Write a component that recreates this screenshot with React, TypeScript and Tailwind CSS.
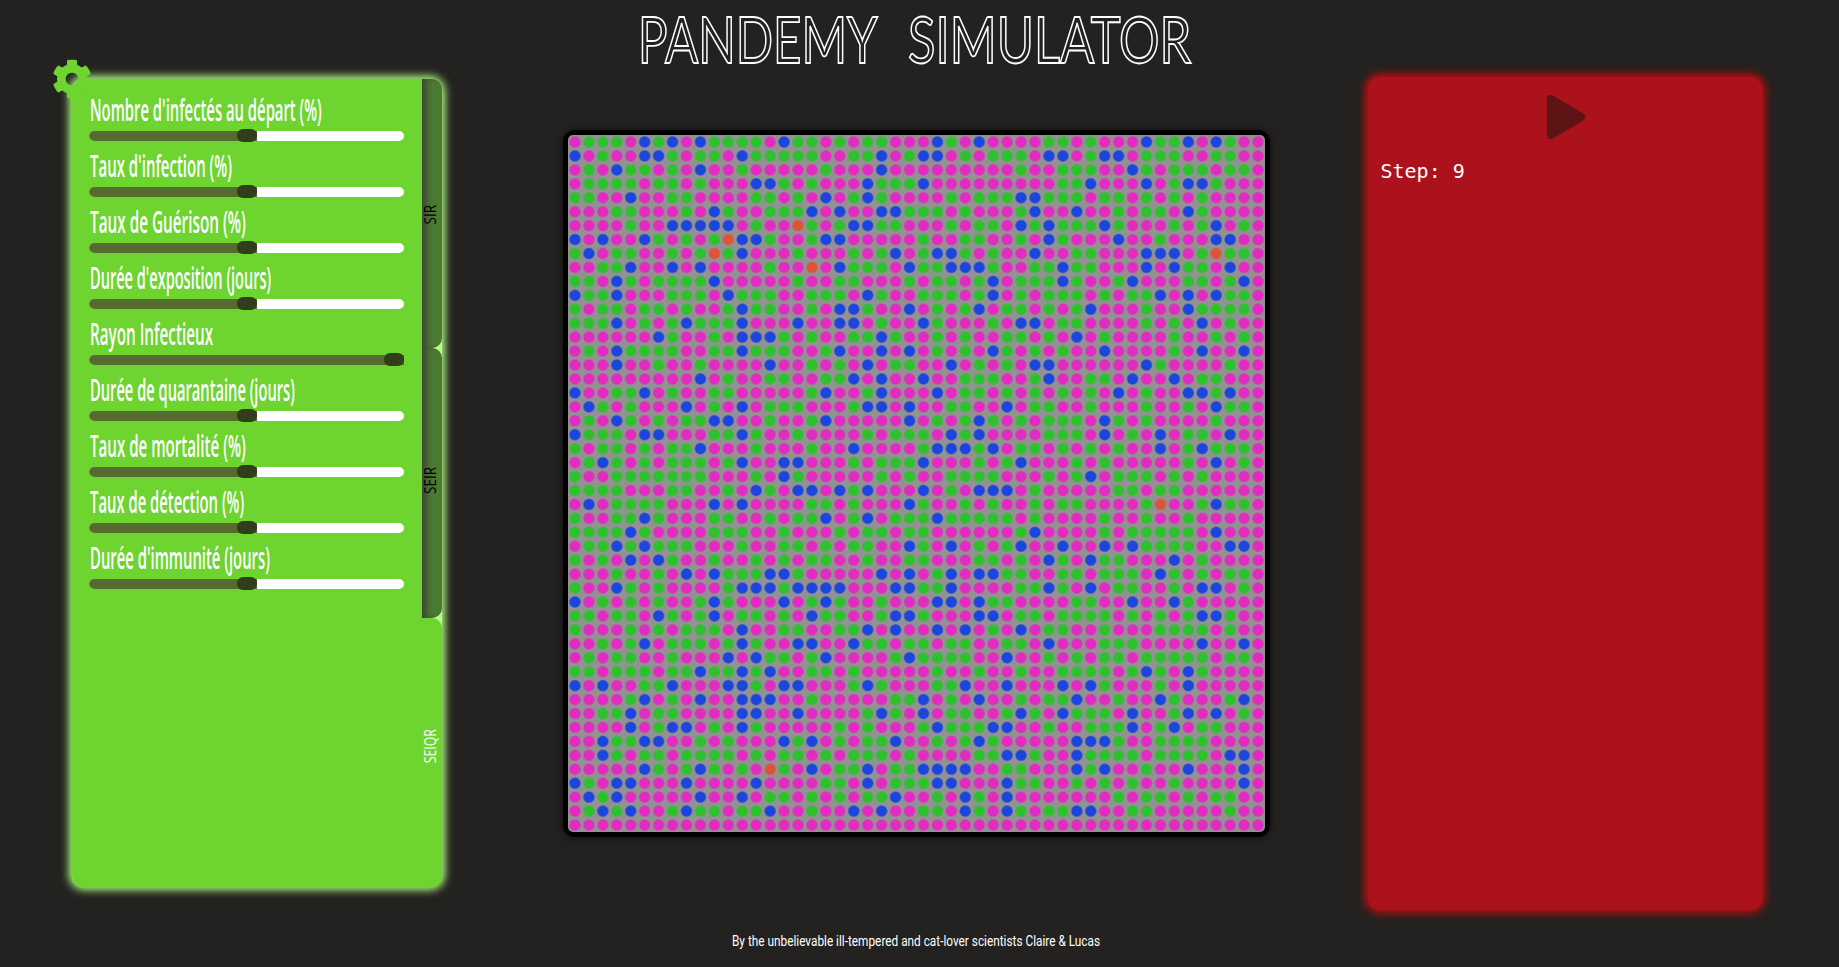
import { useLayoutEffect, useRef, useState } from "react";
import { FaCog, FaPlay } from "react-icons/fa";

const ROWS = `
pgggpbgbpbggggpbggpgpggpp pbgpbppppggpgpppbggbpbgpp
bpgppbbgpggpbgggggppggbpg bbpgpgggpbbpgbbpgggppggpp
pgpbggpgpbppgpppppgpppbpp pppppppgppgggppbgpgggpggp
pggggpggpgpppbbgpgpppbggg bpppppppppggbpppbpgbbgppp
ggppbppggppppggpgpbpgbgpp ppgpgggbbgggpggpgpgpgpppp
pppggpppgpbgppgggbpbppbbg ggpgpppgbppbppgpggpbgpppp
ppppgppbbbbbpgppogpgbbggp ppgpggpbgbgggbgpppgpgbpgp
bpbppbgpgpgobbgppgbbppppp gppggppgpbgpppbppgpppbbpp
gbpggppgpgogbpppgpppgpgbp gbbgpgppbppggpppbbbpgoggp
ppggbppbpbppppgppopbgggpb ggbbbgppggbggpppbpbggpbpp
ggpbgpggggbpppppgppggpppg pggpgbpgggbgppgbpppggpgbp
bggbpppgggpbgggppgggpbgpp gggpgbpgpgggpgpggbpbpbggp
gpggpggpgppgbggppgpbbgppb pgpgbpggpgpgbpppgppbggggp
gggbpgpgbgggbpppbppbbpgpp bgpppgpbbpggppppgpgpbpgpp
ppppppbgppgpbbbgpgppggbgp pgpgppggpgpbpgppppgppgpgp
pgpbggggppggbgggppgbppbpb pgpgpbgpgpgppbppppgpbppbp
pppbppgppgppppbppgpgpbpgg ppbpgpgpbbppppppbgppppgpp
pppppppppbpgppggppggbpbpp bppgggppgbppggpbppbpggppp
bppggbpgppggpppppgbppgbpp pbpggpgpgpgpgpbpgppbbgbpp
pbgpgpppbpgpbpgggpppgbbpb ppggppbpggppgpppgppgpbggp
pgpbgpgpggbbppgppgbpppppb pgpgbgpgpgggpbgpgppppgppp
bgggpbbpppggbgppgppppgpgg gpbgbppppgggpbpgpbpggpbpp
gpggpgpggbpppgpppgppbpppp gbbbgbpggpgpgpgppbpgbgggp
pgbgpgpgggpgbppbbpppgpggg bpppgpgbpppgpgpppppgpbpgp
gppgggggggpppgpbgpppppgpg ppggggpppgpgbpgggpgpgpppp
ggggpppggppgpbgpbbpbgbppp bpgpbbbpgpppppggpggpppppp
pbpggggpppbpbppppggpgpppb gppgpgppgpggppppgoppgbggp
gppggbgpppggppgpggbpgbpgg gbgggggpgppppgppgppgppppp
ggggbgppppgggppgpppgpggpg gppppppgbppppgpgggggpbppp
pggbgbgggpppgppggpgpggppb gpbpgpgbppbppbpbggggppbbp
gpgpbpbgppgppgpgpggppgppg gpppggpgpbgpbggpppbpgpppp
pppgppgpbpbgggbbgpppppbpb pgbpbbggppggpgggpbgpgpggp
gppbgpgppppgbbbgbbbbpppbb ggbppppggbgpbpggppgpbbpgp
bpgpgpgppgbgpppbpgbgppgpp pbbpbggppppggppbppbgppppp
ggpggpbgpgbpggpgpbggppgbb gpppbbpggpggggpgpgpgbbgpp
gpppgpgpgggpbppggppggbpbp pbpbpgpbpggppgpppggggpgpp
ppgpgbpgggpgbgppbbppbggpg gpggppggpbpppgggppppbppbp
pgpggppgpppbpbggpgbppppgb ggggppbppgpgpggpgggggpggp
ggpgggpggbggbgbppggpgpppp pgppgppgppggggpgbgpbgpppp
bpbppggbpppbbgpbbpppgbgpp pggbppbpppbpbgpppgpbppppp
ppppgbpgpbppbbbppgpppppgg bpgpbppgpggbppgppbgpppgbp
ppggbpggppppbbppbppppgbgp bpggppgbgpbgggpbppgbpbpgp
ppppbpgbbpgpbgpppppgpgppp gbgggbbppgppgggbpgbpggppp
ppbggbbppgpgpppbgbpgpggbp pgpgbgpppppbbbgppggggpppp
ppbgpggpggggpgpggpgpgggpg ppppggbbgppbggggpggggpbbp
pppppbgpgbgpgpogpbpggbpgg bbbbppggpppbgbppgppbpppbp
bgpbbpppbppppbppppggpbpgg gbbpppbggppgpgpgppgppppbp
pbgbpppppbppbpggpgpgpggbp pgpbgpbpppppppgpggpgpggpp
pgbgbppgbggpggbppgppbpbpp ggpbgpbgpggbbppggpppppgpp
ppppppppppppppppppppppppp ppppppppppppppppppppppppp
`
  .trim()
  .split("\n")
  .map((row) => row.replace(" ", ""));

const STATE_COLORS: Record<string, string> = {
  p: "#e22cc1",
  g: "#2dc22d",
  b: "#1c45de",
  o: "#dd5438",
};

const SLIDERS = [
  { label: "Nombre d'infectés au départ (%)", width: 232, value: 50 },
  { label: "Taux d'infection (%)", width: 142, value: 50 },
  { label: "Taux de Guérison (%)", width: 156, value: 50 },
  { label: "Durée d'exposition (jours)", width: 181, value: 50 },
  { label: "Rayon Infectieux", width: 123, value: 100 },
  { label: "Durée de quarantaine (jours)", width: 205, value: 50 },
  { label: "Taux de mortalité (%)", width: 156, value: 50 },
  { label: "Taux de détection (%)", width: 154, value: 50 },
  { label: "Durée d'immunité (jours)", width: 180, value: 50 },
];

/** Condenses a line of text horizontally so that it spans the given width. */
function FitText({ text, width }: { text: string; width: number }) {
  const ref = useRef<HTMLSpanElement>(null);
  const [scale, setScale] = useState(1);
  useLayoutEffect(() => {
    if (ref.current) setScale(width / ref.current.offsetWidth);
  }, [text, width]);
  return (
    <span className="block" style={{ width }}>
      <span
        ref={ref}
        className="inline-block origin-left whitespace-nowrap"
        style={{ transform: `scaleX(${scale})` }}
      >
        {text}
      </span>
    </span>
  );
}

/** Same as FitText, for a line that runs vertically. */
function VerticalText({ text, height }: { text: string; height: number }) {
  const ref = useRef<HTMLSpanElement>(null);
  const [scale, setScale] = useState(1);
  useLayoutEffect(() => {
    if (ref.current) setScale(height / ref.current.offsetHeight);
  }, [text, height]);
  return (
    <span
      ref={ref}
      className="inline-block origin-top whitespace-nowrap"
      style={{ transform: `scaleY(${scale})` }}
    >
      {text}
    </span>
  );
}

function Slider({ label, width, value }: { label: string; width: number; value: number }) {
  return (
    <div className="h-14">
      <div className="h-[43px] pt-[2px] pl-px font-['Open_Sans'] text-[31px] leading-[42px] font-semibold text-white">
        <FitText text={label} width={width} />
      </div>
      <div className="flex h-[13px] w-[315px] items-center">
        <div className="flex h-[10px] w-full items-center rounded-full bg-white">
          <div
            className="flex h-[10px] items-center justify-end rounded-l-full bg-[#566b30]"
            style={{ width: 20 + (295 * value) / 100 }}
          >
            <div className="h-[13px] w-5 shrink-0 rounded-[6px] bg-[#313d1b]" />
          </div>
        </div>
      </div>
    </div>
  );
}

function ModelTab({ name, length, active = false }: { name: string; length: number; active?: boolean }) {
  return (
    <div
      className={
        active
          ? "flex flex-1 items-end rounded-r-[10px] bg-[#6dd430] pb-[124px] text-white"
          : "flex flex-1 items-end rounded-r-[10px] bg-[#4c7a31] pb-[124px] text-black shadow-[inset_6px_0_7px_-2px_#38423a]"
      }
    >
      <div className="mr-px -ml-[2px] flex w-5 rotate-180 pl-1 font-['Open_Sans'] text-[17px] leading-5 font-medium [writing-mode:vertical-rl]">
        <VerticalText text={name} height={length} />
      </div>
    </div>
  );
}

function SettingsPanel() {
  return (
    <section className="relative mt-[4px] ml-[72px] flex h-[808px] w-[370px] rounded-[12px] bg-[#b4ff83] shadow-[0_0_8px_3px_#b4ff83]">
      <div className="w-[350px] rounded-l-[12px] bg-[#6dd430] pt-[7px] pl-[17px]">
        {SLIDERS.map((s) => (
          <Slider key={s.label} {...s} />
        ))}
      </div>
      <div className="flex w-5 flex-col bg-[linear-gradient(to_right,#6dd430_0_0)] bg-[length:10px_100%] bg-no-repeat">
        <ModelTab name="SIR" length={20} />
        <ModelTab name="SEIR" length={27} />
        <ModelTab name="SEIQR" length={34} active />
      </div>
      <FaCog className="absolute -top-[20px] -left-[20px] size-10 text-[#6dd430]" />
    </section>
  );
}

function Population() {
  const size = 697;
  const cell = size / 50;
  return (
    <section className="mt-[55px] ml-[121px] size-[707px] rounded-[12px] bg-black p-[5px] shadow-[0_1px_8px_0_#00000099]">
      <svg width={size} height={size} viewBox={`0 0 ${size} ${size}`} className="block rounded-[5px] bg-[#929292]">
        <defs>
          {Object.entries(STATE_COLORS).map(([key, color]) => (
            <radialGradient key={key} id={`dot-${key}`}>
              <stop offset="0.74" stopColor={color} />
              <stop offset="1" stopColor={color} stopOpacity="0" />
            </radialGradient>
          ))}
        </defs>
        {ROWS.map((row, y) =>
          row
            .split("")
            .map((state, x) => (
              <circle
                key={`${x}-${y}`}
                cx={(x + 0.5) * cell}
                cy={(y + 0.5) * cell}
                r={6.4}
                fill={`url(#dot-${state})`}
              />
            )),
        )}
      </svg>
    </section>
  );
}

function StatusPanel() {
  return (
    <section className="mt-[2px] ml-[98px] h-[833px] w-[394px] rounded-[12px] bg-[#ab121c] shadow-[0_0_8px_3px_#c40d0d]">
      <div className="flex justify-center pt-[18px] pl-px">
        <FaPlay className="size-11 text-[#5e1415]" />
      </div>
      <p className="mt-[20px] ml-[12.5px] font-['DejaVu_Sans_Mono'] text-[20px] leading-6 text-white">Step: 9</p>
    </section>
  );
}

export default function App() {
  return (
    <div className="flex h-[967px] w-[1839px] flex-col overflow-hidden bg-[#232220]">
      <h1 className="flex h-[75px] gap-[30px] pt-[3px] pl-[638px] font-['Lato'] text-[63px] leading-[72px] font-normal text-transparent [-webkit-text-stroke:1.8px_#ffffff]">
        <FitText text="PANDEMY" width={240} />
        <FitText text="SIMULATOR" width={283} />
      </h1>
      <main className="flex h-[850px] items-start">
        <SettingsPanel />
        <Population />
        <StatusPanel />
      </main>
      <footer className="pt-[6px] pl-[732px] font-['Roboto'] text-[14px] leading-5 text-white">
        <FitText text="By the unbelievable ill-tempered and cat-lover scientists Claire & Lucas" width={368} />
      </footer>
    </div>
  );
}
